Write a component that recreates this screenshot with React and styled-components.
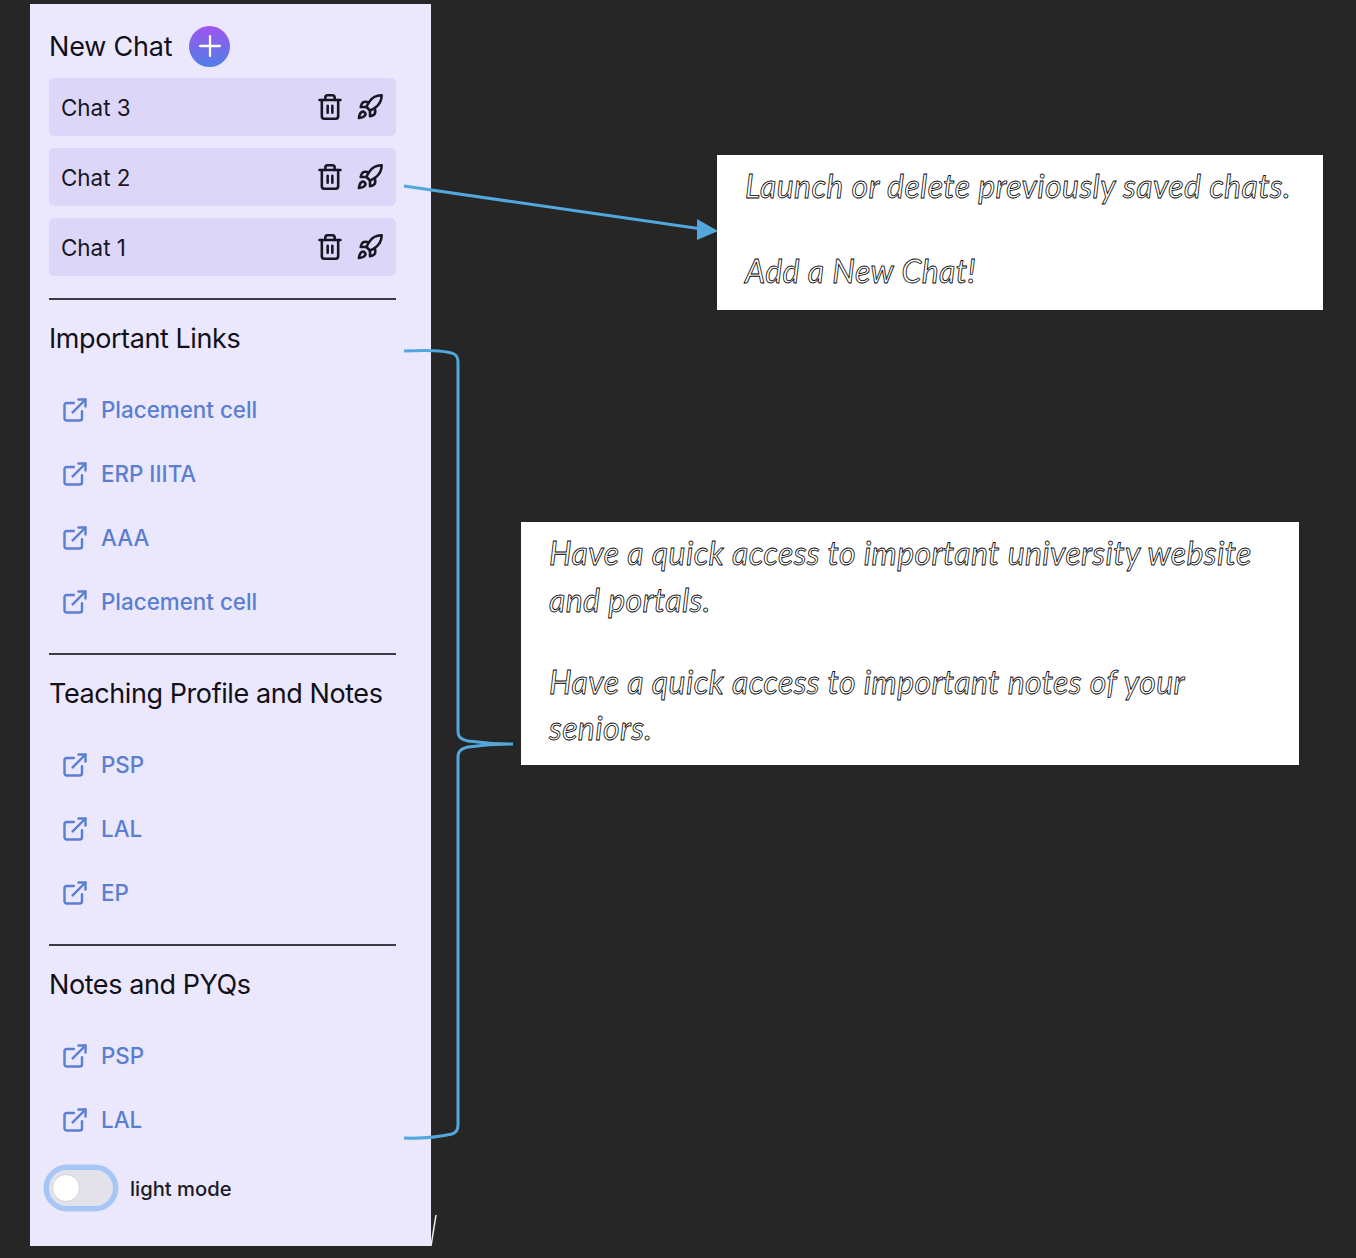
import React from 'react';
import styled, { createGlobalStyle } from 'styled-components';
import { ExternalLink, Plus, Rocket, Trash2 } from 'lucide-react';

const GlobalStyle = createGlobalStyle`
  html, body {
    margin: 0;
    padding: 0;
    background: #262626;
  }
  body {
    font-family: Inter, "Liberation Sans", sans-serif;
  }
`;

const chats = ['Chat 3', 'Chat 2', 'Chat 1'];

const sections = [
  { title: 'Important Links', links: ['Placement cell', 'ERP IIITA', 'AAA', 'Placement cell'] },
  { title: 'Teaching Profile and Notes', links: ['PSP', 'LAL', 'EP'] },
  { title: 'Notes and PYQs', links: ['PSP', 'LAL'] },
];

export default function App() {
  return (
    <Page>
      <GlobalStyle />
      <Sidebar>
        <NewChat>
          <NewChatTitle>New Chat</NewChatTitle>
          <AddButton><Plus size={34} strokeWidth={1.6} /></AddButton>
        </NewChat>
        <ChatList>
          {chats.map(chat => (
            <ChatRow key={chat}>
              <span>{chat}</span>
              <ChatActions>
                <Trash2 size={28} strokeWidth={2.2} />
                <Rocket size={28} strokeWidth={2.2} />
              </ChatActions>
            </ChatRow>
          ))}
        </ChatList>
        {sections.map(section => (
          <Section key={section.title}>
            <Heading>{section.title}</Heading>
            <LinkList>
              {section.links.map((link, i) => (
                <LinkRow key={link + i}>
                  <ExternalLink size={28} strokeWidth={2.1} />
                  <LinkName>{link}</LinkName>
                </LinkRow>
              ))}
            </LinkList>
          </Section>
        ))}
        <ToggleRow>
          <Toggle><Knob /></Toggle>
          <ToggleLabel>light mode</ToggleLabel>
        </ToggleRow>
      </Sidebar>

      <Overlay width="1356" height="1258" viewBox="0 0 1356 1258" fill="none">
        <path d="M404 186 L702 229" stroke="#52a8dc" strokeWidth="3.2" />
        <path d="M718 231 L697 219 L697 240 Z" fill="#52a8dc" />
        <path
          d="M404 351 C425 350 445 350 454 354 Q458 356 458 362 L458 732 Q458 739 468 741 Q490 744 513 744 Q490 744 468 747 Q458 749 458 756 L458 1125 Q458 1132 452 1134 Q430 1139 404 1138"
          stroke="#52a8dc"
          strokeWidth="3"
        />
        <path d="M436 1215 L431 1246" stroke="#f2f2f2" strokeWidth="1.5" />
      </Overlay>

      <Note $left={717} $top={155} $width={606} $height={155} $pad="15px 0 0 28px">
        <NoteLine $lineHeight="32px">Launch or delete previously saved chats.</NoteLine>
        <NoteGap $height={53} />
        <NoteLine $lineHeight="32px">Add a New Chat!</NoteLine>
      </Note>
      <Note $left={521} $top={522} $width={778} $height={243} $pad="7px 0 0 28px">
        <NoteLine $lineHeight="47px">Have a quick access to important university website<br />and portals.</NoteLine>
        <NoteGap $height={36} />
        <NoteLine $lineHeight="46px">Have a quick access to important notes of your<br />seniors.</NoteLine>
      </Note>
    </Page>
  );
}

const Page = styled.div`
  position: relative;
  width: 1356px;
  height: 1258px;
  padding: 4px 0 0 30px;
  box-sizing: border-box;
  overflow: hidden;
  background: #262626;
`;

const Sidebar = styled.aside`
  width: 401px;
  height: 1242px;
  box-sizing: border-box;
  padding: 21px 35px 0 19px;
  background: #ebe8fe;
  color: #15131f;
`;

const Heading = styled.h2`
  margin: 0;
  font-size: 27px;
  line-height: 42px;
  font-weight: 400;
  letter-spacing: -0.42px;
  color: #111018;
  white-space: nowrap;
`;

const NewChatTitle = styled(Heading)`
  padding-top: 2px;
  letter-spacing: -0.2px;
`;

const NewChat = styled.div`
  display: flex;
  align-items: center;
  gap: 17px;
  height: 42px;
`;

const AddButton = styled.div`
  display: flex;
  align-items: center;
  justify-content: center;
  width: 41px;
  height: 41px;
  border-radius: 50%;
  color: #fff;
  background: linear-gradient(180deg, #a055ec 0%, #4f7fe8 100%);
`;

const ChatList = styled.div`
  display: flex;
  flex-direction: column;
  gap: 12px;
  margin-top: 11px;
`;

const ChatRow = styled.div`
  display: flex;
  align-items: center;
  justify-content: space-between;
  height: 58px;
  padding: 0 12px;
  border-radius: 5px;
  background: #dcd6f9;
  font-size: 22.4px;
  color: #171622;
`;

const ChatActions = styled.div`
  display: flex;
  align-items: center;
  gap: 12px;
`;

const Section = styled.section`
  margin-top: 22px;
  padding-top: 18px;
  border-top: 2px solid #3c3a44;
  & + & {
    margin-top: 31px;
  }
`;

const LinkList = styled.div`
  display: flex;
  flex-direction: column;
  gap: 24px;
  margin-top: 30px;
`;

const LinkRow = styled.div`
  display: flex;
  align-items: center;
  gap: 12px;
  height: 40px;
  padding-left: 12px;
  font-size: 22.4px;
  font-weight: 500;
  color: #5a7fd0;
`;

const LinkName = styled.span`
  padding-bottom: 2px;
`;

const ToggleRow = styled.div`
  display: flex;
  align-items: center;
  gap: 16px;
  margin: 30px 0 0 0;
`;

const Toggle = styled.div`
  display: flex;
  align-items: center;
  width: 64px;
  height: 36px;
  padding: 0 3px;
  box-sizing: border-box;
  border-radius: 18px;
  background: #e3e2ea;
  box-shadow: 0 0 0 5.5px #a6c6f6;
`;

const Knob = styled.div`
  width: 28px;
  height: 28px;
  border-radius: 50%;
  background: #fff;
  border: 1px solid #d4d3da;
  box-sizing: border-box;
`;

const ToggleLabel = styled.span`
  font-size: 20.2px;
  font-weight: 500;
  color: #1b1a28;
  margin-left: 1px;
`;

const Overlay = styled.svg`
  position: absolute;
  left: 0;
  top: 0;
  pointer-events: none;
`;

const Note = styled.div`
  position: absolute;
  left: ${p => p.$left}px;
  top: ${p => p.$top}px;
  width: ${p => p.$width}px;
  height: ${p => p.$height}px;
  box-sizing: border-box;
  padding: ${p => p.$pad};
  background: #fff;
`;

const NoteLine = styled.div`
  font-family: Lato, "Liberation Sans", sans-serif;
  font-style: italic;
  font-size: 32px;
  letter-spacing: 0.38px;
  line-height: ${p => p.$lineHeight};
  color: #fff;
  -webkit-text-stroke: 0.8px #000;
  white-space: nowrap;
`;

const NoteGap = styled.div`
  height: ${p => p.$height}px;
`;
